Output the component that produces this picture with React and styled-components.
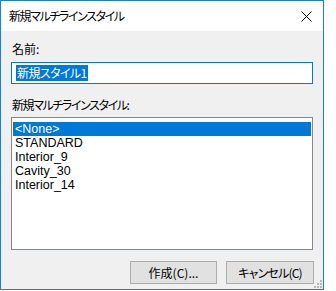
import styled, { createGlobalStyle } from "styled-components";

const GlobalStyle = createGlobalStyle`
  html, body {
    margin: 0;
    padding: 0;
    background: #fff;
  }
  body {
    font-family: "Noto Sans CJK JP", "Liberation Sans", sans-serif;
    font-size: 12px;
  }
`;

const jp = `"Noto Sans CJK JP", "Liberation Sans", sans-serif`;

const Window = styled.div`
  position: relative;
  width: 324px;
  height: 290px;
  box-sizing: border-box;
  border: 1px solid #1a80d6;
  background: #f0f0f0;
  display: flex;
  flex-direction: column;
`;

const TitleBar = styled.div`
  height: 30px;
  background: #fff;
  display: flex;
  align-items: center;
  justify-content: space-between;
  padding: 0 9px 0 8px;
`;

const TitleText = styled.span`
  font-family: ${jp};
  font-size: 12px;
  font-feature-settings: "palt";
  letter-spacing: -1.4px;
  color: #000;
  line-height: 16px;
`;

const CloseBtn = styled.div`
  width: 12px;
  height: 12px;
  display: flex;
  align-items: center;
  justify-content: center;
  margin-right: 2px;
`;

const Body = styled.div`
  flex: 1;
  display: flex;
  flex-direction: column;
  padding: 10px 10px 5px 10px;
`;

const Label = styled.div`
  font-family: ${jp};
  font-size: 12px;
  font-feature-settings: "palt";
  letter-spacing: ${({ $tight }) => ($tight ? "-1.4px" : "0")};
  line-height: 16px;
  height: 16px;
  color: #000;
  margin-top: ${({ $top }) => $top || 0}px;
  padding-left: 1px;
`;

const TextField = styled.div`
  margin-top: 5px;
  height: 22px;
  box-sizing: border-box;
  border: 1px solid #0078d7;
  background: #fff;
  display: flex;
  align-items: center;
  padding-left: 4px;
`;

const Selected = styled.span`
  font-family: ${jp};
  font-size: 12px;
  font-feature-settings: "palt";
  letter-spacing: -0.6px;
  line-height: 16px;
  background: #0078d7;
  color: #fff;
  padding: 0 1px;
`;

const ListBox = styled.div`
  margin-top: 4px;
  height: 133px;
  box-sizing: border-box;
  border: 1px solid #828790;
  background: #fff;
  padding: 4px 1px 0 1px;
  display: flex;
  flex-direction: column;
`;

const ListItem = styled.div`
  height: 14px;
  line-height: 14px;
  font-family: "Liberation Sans", Arial, sans-serif;
  font-size: 12.5px;
  padding-left: 2px;
  color: ${({ $active }) => ($active ? "#fff" : "#000")};
  background: ${({ $active }) => ($active ? "#0078d7" : "transparent")};
`;

const ButtonRow = styled.div`
  margin-top: 11px;
  display: flex;
  justify-content: flex-end;
  gap: 9px;
  margin-right: -1px;
`;

const Button = styled.div`
  width: ${({ $w }) => $w}px;
  height: 23px;
  box-sizing: border-box;
  border: 1px solid #adadad;
  background: #e1e1e1;
  display: flex;
  align-items: center;
  justify-content: center;
  font-family: ${jp};
  font-size: 12px;
  font-feature-settings: "palt";
  letter-spacing: ${({ $tight }) => ($tight ? "-0.8px" : "0")};
  color: #000;
`;

const Grip = styled.svg`
  position: absolute;
  right: 1px;
  bottom: 1px;
`;

const items = ["<None>", "STANDARD", "Interior_9", "Cavity_30", "Interior_14"];

export default function App() {
  return (
    <>
      <GlobalStyle />
      <Window>
        <TitleBar>
          <TitleText>新規マルチラインスタイル</TitleText>
          <CloseBtn>
            <svg width="11" height="11" viewBox="0 0 11 11">
              <path d="M0.5 0.5L10.5 10.5M10.5 0.5L0.5 10.5" stroke="#000" strokeWidth="1" />
            </svg>
          </CloseBtn>
        </TitleBar>
        <Body>
          <Label>名前:</Label>
          <TextField>
            <Selected>新規スタイル1</Selected>
          </TextField>
          <Label $top={13} $tight>
            新規マルチラインスタイル:
          </Label>
          <ListBox>
            {items.map((it, i) => (
              <ListItem key={it} $active={i === 0}>
                {it}
              </ListItem>
            ))}
          </ListBox>
          <ButtonRow>
            <Button $w={87}>作成(C)...</Button>
            <Button $w={88} $tight>
              キャンセル(C)
            </Button>
          </ButtonRow>
        </Body>
        <Grip width="8" height="8" viewBox="0 0 8 8">
          {[
            [6, 0],
            [6, 3],
            [3, 3],
            [6, 6],
            [3, 6],
            [0, 6],
          ].map(([x, y]) => (
            <rect key={`${x}-${y}`} x={x} y={y} width="2" height="2" fill="#b8b8b8" />
          ))}
        </Grip>
      </Window>
    </>
  );
}
